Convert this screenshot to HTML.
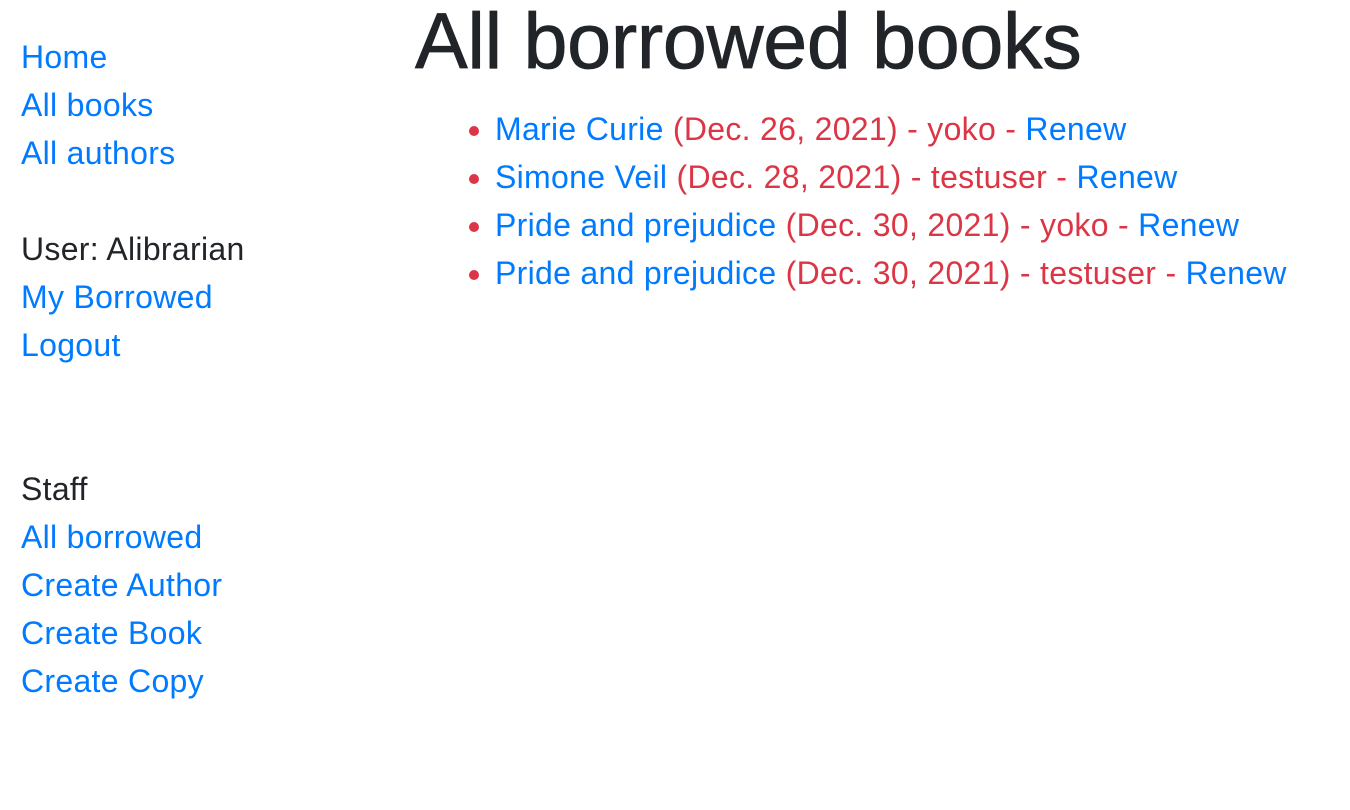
<!DOCTYPE html>
<html><head><meta charset="utf-8"><style>
body{margin:0;font-family:"Liberation Sans",Helvetica,Arial,sans-serif;font-size:32px;line-height:48px;color:#212529;background:#fff;width:1350px;height:810px;overflow:hidden;position:relative;letter-spacing:0.3px}
a{color:#007bff;text-decoration:none}
.side{position:absolute;left:21px;top:33px}
.side div{height:48px}
.main{position:absolute;left:415px;top:0}
h1{margin:-4px 0 0 0;font-size:79px;line-height:90px;font-weight:500;color:#212529;letter-spacing:-0.3px;-webkit-text-stroke:0.8px #212529}
ul{margin:19px 0 0 0;padding-left:80px;color:#dc3545}
li{height:48px}
li::marker{color:#dc3545}
</style></head><body>
<div class="side">
<div><a>Home</a></div>
<div><a>All books</a></div>
<div><a>All authors</a></div>
<div></div>
<div>User: Alibrarian</div>
<div><a>My Borrowed</a></div>
<div><a>Logout</a></div>
<div></div><div></div>
<div>Staff</div>
<div><a>All borrowed</a></div>
<div><a>Create Author</a></div>
<div><a>Create Book</a></div>
<div><a>Create Copy</a></div>
</div>
<div class="main">
<h1>All borrowed books</h1>
<ul>
<li><a>Marie Curie</a> (Dec. 26, 2021) - yoko - <a>Renew</a></li>
<li><a>Simone Veil</a> (Dec. 28, 2021) - testuser - <a>Renew</a></li>
<li><a>Pride and prejudice</a> (Dec. 30, 2021) - yoko - <a>Renew</a></li>
<li><a>Pride and prejudice</a> (Dec. 30, 2021) - testuser - <a>Renew</a></li>
</ul>
</div>
</body></html>
